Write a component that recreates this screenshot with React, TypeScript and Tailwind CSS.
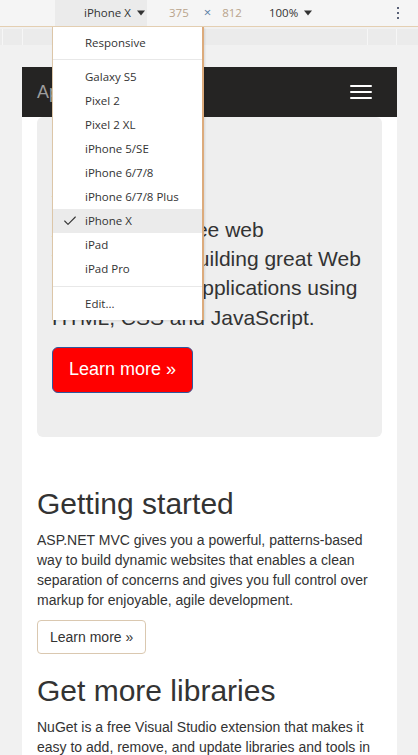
import { Check } from "lucide-react";

const devices = [
  "Galaxy S5",
  "Pixel 2",
  "Pixel 2 XL",
  "iPhone 5/SE",
  "iPhone 6/7/8",
  "iPhone 6/7/8 Plus",
  "iPhone X",
  "iPad",
  "iPad Pro",
];

const Caret = () => (
  <svg width="8" height="6" viewBox="0 0 8 6" className="shrink-0">
    <path d="M0 0.5 L8 0.5 L4 5.5 Z" fill="#333" />
  </svg>
);

const Toolbar = () => (
  <div className="flex h-[27px] shrink-0 items-stretch border-b border-[#e4cfb2] bg-[#f5f5f5] font-['Open_Sans',sans-serif] text-[11.5px] text-[#333]">
    <div className="ml-[55px] flex w-[92px] items-center gap-[6px] bg-[#ebebeb] pl-[29px]">
      <span>iPhone X</span>
      <Caret />
    </div>
    <span className="ml-[22px] self-center text-[#b9a48c]">375</span>
    <span className="ml-[15px] self-center text-[13px] text-[#5b7fa6]">×</span>
    <span className="ml-[11px] self-center text-[#b9a48c]">812</span>
    <div className="ml-[27px] flex items-center gap-[6px]">
      <span>100%</span>
      <Caret />
    </div>
    <div className="ml-auto mr-[19px] flex flex-col items-center justify-center gap-[3px]">
      <span className="h-[2px] w-[2px] bg-[#5a6278]" />
      <span className="h-[2px] w-[2px] bg-[#5a6278]" />
      <span className="h-[2px] w-[2px] bg-[#5a6278]" />
    </div>
  </div>
);

const Ruler = () => (
  <div className="mt-[2px] flex h-[16px] shrink-0 bg-[#ebebeb]">
    <div className="w-[2px]" />
    <div className="w-px bg-[#f6f6f6]" />
    <div className="w-[19px]" />
    <div className="w-px bg-[#f6f6f6]" />
    <div className="flex-1" />
    <div className="w-px bg-[#f6f6f6]" />
    <div className="w-[28px]" />
    <div className="w-px bg-[#f6f6f6]" />
    <div className="w-[21px]" />
  </div>
);

const DeviceMenu = () => (
  <div className="absolute left-[52px] top-[27px] w-[152px] border-l border-r-2 border-[#dcc6a8] border-r-[#dcab7c] bg-white pb-[4px] pt-[4px] font-['Open_Sans',sans-serif] text-[11.5px] text-[#333] shadow-[1px_1px_2px_rgba(0,0,0,0.1)]">
    <div className="flex h-[24px] items-center pl-[32px]">Responsive</div>
    <div className="mb-[5px] mt-[4px] h-px bg-[#e8e8e8]" />
    {devices.map((d) => (
      <div
        key={d}
        className={
          d === "iPhone X"
            ? "flex h-[24px] items-center bg-[#ebebeb]"
            : "flex h-[24px] items-center"
        }
      >
        <div className="flex w-[32px] items-center pl-[9px]">
          {d === "iPhone X" && <Check size={16} strokeWidth={1.6} color="#333" />}
        </div>
        <span>{d}</span>
      </div>
    ))}
    <div className="my-[5px] h-px bg-[#e8e8e8]" />
    <div className="flex h-[24px] items-center pl-[32px]">Edit...</div>
  </div>
);

const Navbar = () => (
  <div className="flex h-[50px] items-center justify-between bg-[#252423]">
    <span className="pl-[15px] text-[18px] text-[#9d9d9d]">Application name</span>
    <button className="mr-[15px] flex flex-col gap-[4px] rounded-[4px] px-[10px] py-[10px]">
      <span className="block h-[2px] w-[22px] rounded-[1px] bg-white" />
      <span className="block h-[2px] w-[22px] rounded-[1px] bg-white" />
      <span className="block h-[2px] w-[22px] rounded-[1px] bg-white" />
    </button>
  </div>
);

const Page = () => (
  <div className="bg-white text-[#333]">
    <Navbar />
    <div className="px-[15px]">
      <div className="mb-[30px] rounded-[6px] bg-[#eeeeee] px-[15px] pb-[29px] pt-[28px]">
        <h1 className="mb-[10px] mt-[20px] text-[36px] leading-[1.1]">ASP.NET</h1>
        <p className="mb-[15px] text-[21px] leading-[1.4]">
          ASP.NET is a free web framework for building great Web sites and Web applications using
          HTML, CSS and JavaScript.
        </p>
        <p className="mb-[15px]">
          <a className="inline-block rounded-[6px] border border-[#2f589c] bg-[#ff0000] px-[16px] py-[10px] text-[18px] leading-[1.3333] text-white">
            Learn more »
          </a>
        </p>
      </div>
      <div className="flow-root text-[14px] leading-[20px]">
        <div>
          <h2 className="mb-[10px] mt-[20px] text-[30px] leading-[1.1]">Getting started</h2>
          <p className="mb-[10px]">
            ASP.NET MVC gives you a powerful, patterns-based way to build dynamic websites that
            enables a clean separation of concerns and gives you full control over markup for
            enjoyable, agile development.
          </p>
          <p className="mb-[10px]">
            <a className="inline-block rounded-[4px] border border-[#dac8b0] bg-white px-[12px] py-[6px]">
              Learn more »
            </a>
          </p>
        </div>
        <div>
          <h2 className="mb-[10px] mt-[20px] text-[30px] leading-[1.1]">Get more libraries</h2>
          <p className="mb-[10px]">
            NuGet is a free Visual Studio extension that makes it easy to add, remove, and update
            libraries and tools in Visual Studio projects.
          </p>
        </div>
      </div>
    </div>
  </div>
);

export default function App() {
  return (
    <div className="relative flex h-[755px] w-[418px] flex-col overflow-hidden bg-[#f1f1f1] font-['Liberation_Sans',Arial,sans-serif]">
      <Toolbar />
      <Ruler />
      <div className="min-h-0 flex-1 pl-[22px] pt-[22px]">
        <div className="h-full w-[375px] overflow-hidden bg-white">
          <Page />
        </div>
      </div>
      <DeviceMenu />
    </div>
  );
}
